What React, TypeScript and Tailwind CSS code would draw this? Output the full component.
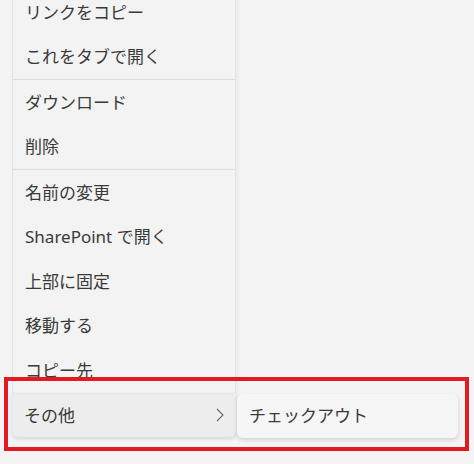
const groups: string[][] = [
  ["リンクをコピー", "これをタブで開く"],
  ["ダウンロード", "削除"],
  ["名前の変更", "SharePoint で開く", "上部に固定", "移動する", "コピー先"],
];

function Item({ label }: { label: string }) {
  return (
    <div className="h-[44.5px] flex items-center pl-3 text-[17px] text-[#3a3a3a]">
      {label}
    </div>
  );
}

export default function App() {
  return (
    <div
      className="relative w-[474px] h-[464px] overflow-hidden bg-[#f4f4f4]"
      style={{ fontFamily: '"Noto Sans", "Noto Sans CJK JP", sans-serif' }}
    >
      <div className="ml-3 -mt-[10px] w-[224px] relative">
        <div className="bg-[#f3f3f3] border-x border-[#e3e3e3] shadow-[2px_0_4px_rgba(0,0,0,0.05)]">
          {groups.map((g, i) => (
            <div key={i} className={i > 0 ? "border-t border-[#dedede]" : ""}>
              {g.map((label) => (
                <Item key={label} label={label} />
              ))}
            </div>
          ))}
        </div>
        <div className="relative h-[44.5px] flex items-center justify-between pl-3 pr-[12px] text-[17px] text-[#3a3a3a] bg-[#ededed] rounded-b-md shadow-[0_2px_4px_rgba(0,0,0,0.12)] border-t border-[#e6e6e6]">
          <span>その他</span>
          <svg width="8" height="14" viewBox="0 0 8 14" fill="none">
            <path d="M1 1l6 6-6 6" stroke="#6a6a6a" strokeWidth="1.1" />
          </svg>
          <div className="absolute left-[225px] top-0 w-[221px] h-[44px] flex items-center pl-[12px] bg-[#f6f6f6] rounded-md shadow-[0_2px_5px_rgba(0,0,0,0.14)] text-[#3a3a3a]">
            チェックアウト
          </div>
        </div>
      </div>
      <div className="absolute left-[4px] top-[377px] w-[465px] h-[74px] border-4 border-[#e21b23]" />
    </div>
  );
}
